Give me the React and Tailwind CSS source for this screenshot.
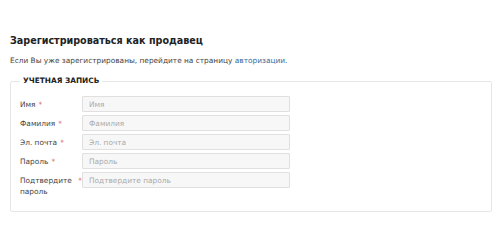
export default function App() {
  const fields = [
    { label: "Имя", ph: "Имя" },
    { label: "Фамилия", ph: "Фамилия" },
    { label: "Эл. почта", ph: "Эл. почта" },
    { label: "Пароль", ph: "Пароль" },
    { label: "Подтвердите пароль", ph: "Подтвердите пароль" },
  ];

  return (
    <div className="w-[500px] h-[250px] bg-white font-['DejaVu_Sans',sans-serif] text-[#333] pt-[33px] px-[10px]">
      <h2 className="font-bold text-[9.6px] leading-[16px] text-[#222]">
        Зарегистрироваться как продавец
      </h2>
      <p className="mt-[6px] text-[7.4px] leading-[12px] text-[#444]">
        Если Вы уже зарегистрированы, перейдите на страницу{" "}
        <a className="text-[#3a6a9a]">авторизации</a>.
      </p>

      <fieldset className="mt-[9px] w-[482px] h-[136px] border border-[#e6e6e6] rounded-[2px] px-[9px] pt-[6px]">
        <legend className="ml-[0px] px-[3px] font-bold text-[7.4px] leading-[10px] text-[#222]">
          УЧЕТНАЯ ЗАПИСЬ
        </legend>
        <div className="flex flex-col gap-[3px] mt-[4px]">
          {fields.map((f) => (
            <div key={f.label} className="flex items-start">
              <label className="w-[62px] flex items-start pt-[3px] text-[7.4px] leading-[11px] text-[#444]">
                <span>{f.label}</span>
                <span className="ml-[3px] text-[#d9534f]">*</span>
              </label>
              <input
                placeholder={f.ph}
                className="w-[208px] h-[16px] bg-[#f7f7f7] border border-[#e0e0e0] rounded-[1px] px-[6px] text-[7.4px] placeholder:text-[#aaa] outline-none"
              />
            </div>
          ))}
        </div>
      </fieldset>
    </div>
  );
}
